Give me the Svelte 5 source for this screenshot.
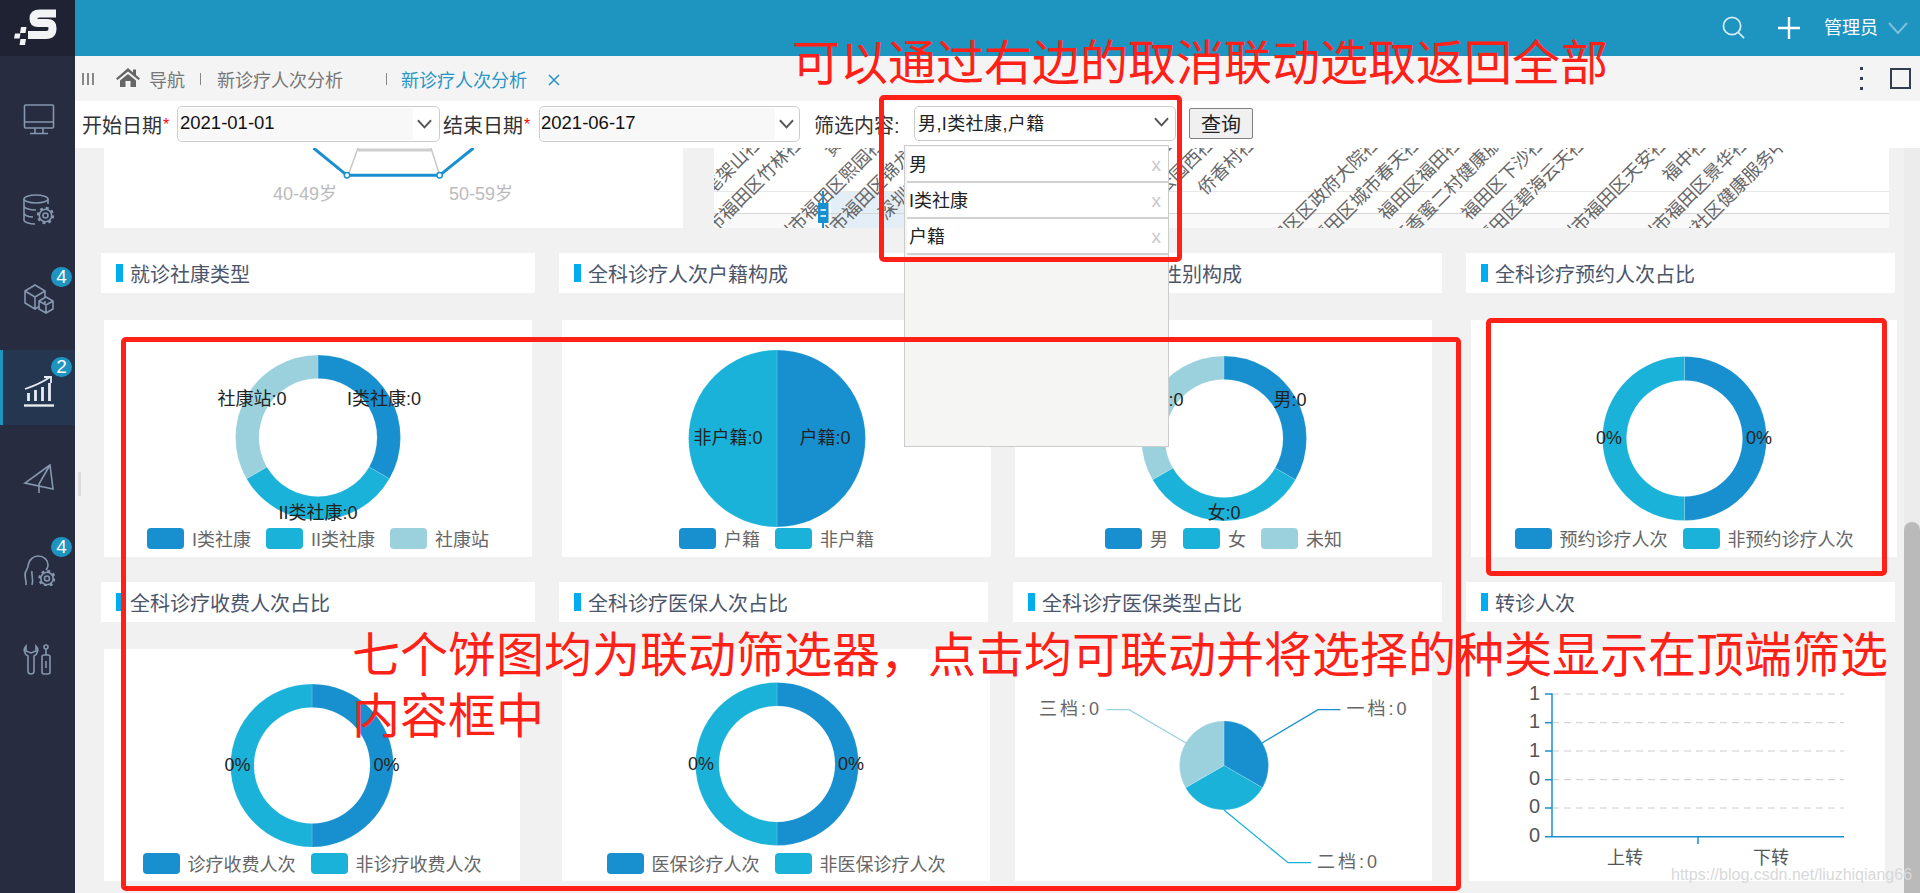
<script>
  const c1 = '#1890cf', c2 = '#1ab2d8', c3 = '#9ad1dd';

  function pt(cx, cy, r, a) {
    const t = (a - 90) * Math.PI / 180;
    return (cx + r * Math.cos(t)).toFixed(2) + ' ' + (cy + r * Math.sin(t)).toFixed(2);
  }
  function arc(cx, cy, R, r, a0, a1) {
    const outer = `M${pt(cx, cy, R, a0)} A${R} ${R} 0 0 1 ${pt(cx, cy, R, a1)}`;
    if (!r) return `${outer} L${cx} ${cy} Z`;
    return `${outer} L${pt(cx, cy, r, a1)} A${r} ${r} 0 0 0 ${pt(cx, cy, r, a0)} Z`;
  }
  function slices(n) {
    const colors = [c1, c2, c3];
    return Array.from({ length: n }, (_, i) => ({ color: colors[i], a0: (360 / n) * i, a1: (360 / n) * (i + 1) }));
  }

  const row1 = [
    { x: 104, w: 428, cx: 318, cy: 437.5, R: 82.5, r: 59, n: 3,
      labels: [['I类社康:0', 384, 398], ['II类社康:0', 318, 512], ['社康站:0', 252, 398]],
      legend: ['I类社康', 'II类社康', '社康站'] },
    { x: 562, w: 429, cx: 777, cy: 438.5, R: 88.5, r: 0, n: 2,
      labels: [['户籍:0', 825, 437], ['非户籍:0', 728, 437]],
      legend: ['户籍', '非户籍'] },
    { x: 1015, w: 417, cx: 1224, cy: 438.5, R: 82.5, r: 59, n: 3,
      labels: [['男:0', 1290, 399], ['女:0', 1224, 512], ['未知:0', 1158, 399]],
      legend: ['男', '女', '未知'] },
    { x: 1471, w: 426, cx: 1684.5, cy: 438.5, R: 82, r: 58, n: 2,
      labels: [['0%', 1759, 437], ['0%', 1609, 437]],
      legend: ['预约诊疗人次', '非预约诊疗人次'] }
  ];
  const row2a = { x: 104, w: 416, cx: 312, cy: 767.5, R: 81.5, r: 58, n: 2,
    labels: [['0%', 386.5, 766], ['0%', 237.5, 766]], legend: ['诊疗收费人次', '非诊疗收费人次'] };
  const row2b = { x: 562, w: 428, cx: 777, cy: 766, R: 81.5, r: 58, n: 2,
    labels: [['0%', 851, 765], ['0%', 701, 765]], legend: ['医保诊疗人次', '非医保诊疗人次'] };

  const titles1 = ['就诊社康类型', '全科诊疗人次户籍构成', '全科诊疗人次性别构成', '全科诊疗预约人次占比'];
  const titles2 = ['全科诊疗收费人次占比', '全科诊疗医保人次占比', '全科诊疗医保类型占比', '转诊人次'];

  const axisLabels = [
    [764, '深圳市福田区笔架山社区'], [805, '深圳市福田区竹林社区'], [846, '黄木'],
    [887, '深圳市福田区熙园社区'], [928, '深圳市福田区锦龙社区'], [964, '深圳市福田社区'],
    [1176, '福田区政府社区'], [1217, '深圳市福田区公园西社区'], [1258, '侨香村社区'],
    [1382, '深圳市福田区区政府大院社区'], [1423, '深圳市福田区城市春天社区'], [1464, '福田区福田社区'],
    [1504, '深圳市福田区香蜜二村健康服务'], [1547, '福田区下沙社区'], [1588, '深圳市福田区碧海云天社区'],
    [1670, '深圳市福田区天安社区'], [1710, '福中社区'], [1751, '深圳市福田区景华社区'],
    [1790, '福田区华强北社区健康服务中心']
  ];

  const gridY = [696, 724.7, 753, 781.7, 810];
  const tickLabels = [['1', 694], ['1', 722], ['1', 751], ['0', 779], ['0', 807], ['0', 836]];

  const navItems = [
    { key: 'monitor' }, { key: 'db' }, { key: 'cubes', badge: 4 }, { key: 'chart', badge: 2, active: true },
    { key: 'plane' }, { key: 'head', badge: 4 }, { key: 'tools' }
  ];
  const dropItems = ['男', 'I类社康', '户籍'];
</script>

{#snippet chevron()}
  <svg class="chev" viewBox="0 0 16 10"><polyline points="1,1 8,8.5 15,1" /></svg>
{/snippet}

{#snippet gear(x, y)}
  <circle class="fillbg" cx={x} cy={y} r="6.200" />
  <circle cx={x} cy={y} r="2.500" />
  <circle cx={x} cy={y} r="7.400" stroke-width="2.600" stroke-dasharray="2.900 2.910" />
{/snippet}

{#snippet navIcon(key)}
  <svg class="nav-icon" class:on={key === 'chart'} viewBox="0 0 32 32">
    {#if key === 'monitor'}
      <rect x="1.500" y="1" width="29" height="23" rx="1" />
      <path d="M1.500 18H30.500M12 24V29M20 24V29M7 29.500H25" />
    {:else if key === 'db'}
      <ellipse cx="13" cy="5" rx="12" ry="4" />
      <path d="M1 5V26C1 28 6 30 12 30M25 5V10M1 12C1 14 6 16 13 16M1 19C1 21 5 23 10 23" />
      {@render gear(22.500, 21.500)}
    {:else if key === 'cubes'}
      <path d="M12 1L22 7V19L12 25L2 19V7ZM2 7L12 13L22 7M12 13V25" />
      <path class="fillbg" d="M23 13L30 17V25L23 29L16 25V17ZM16 17L23 21L30 17M23 21V29" />
    {:else if key === 'chart'}
      <path d="M1 30.500H31" stroke-width="2.400" />
      <path d="M5.500 26V18M12.500 26V15M19.500 26V12M26.500 26V8" stroke-width="2.800" />
      <path d="M2 14C11 11 20 7 27 2M21 2H28V8" stroke-width="1.800" />
    {:else if key === 'plane'}
      <path d="M27 1L2 19L30 25ZM27 1L16 20V29" />
    {:else if key === 'head'}
      <path d="M3 31C4 25 0 22 3 17C4 15 5 14 5 12C6 5 11 2 15 2C21 2 25 6 25 11C25 13 24 15 23 16M9 31C11 25 8 21 9 17" />
      {@render gear(24, 24.500)}
    {:else}
      <path d="M3 2C0 5 1 10 5 12V27A3 3 0 0 0 11 27V12C15 10 16 5 13 2V7L8 9L3 7Z" />
      <circle cx="23" cy="3" r="2" />
      <path d="M23 5V11M23 17V24" />
      <rect x="19" y="11" width="8" height="19" rx="2" />
    {/if}
  </svg>
{/snippet}

{#snippet legend(items)}
  <div class="legend">
    {#each items as t, i}
      <span class="leg"><i class="sw" class:s1={i === 0} class:s2={i === 1} class:s3={i === 2}></i>{t}</span>
    {/each}
  </div>
{/snippet}

{#snippet pie(d, y0, h)}
  <svg class="plot" width={d.w} height={h} viewBox="{d.x} {y0} {d.w} {h}">
    {#each slices(d.n) as s}
      <path d={arc(d.cx, d.cy, d.R, d.r, s.a0, s.a1)} fill={s.color} stroke="#fff" stroke-opacity=".25" stroke-width=".6" />
    {/each}
    {#each d.labels as l}
      <text class="plab" x={l[1]} y={l[2] + 6.5} text-anchor="middle">{l[0]}</text>
    {/each}
  </svg>
{/snippet}

<div class="app">
  <aside class="side">
    <div class="logo">
      <svg viewBox="0 0 75 56" width="75" height="56">
        <path d="M56 13.500H40Q33.500 13.500 33.500 18.500Q33.500 23 38 23H47Q52.500 23 52.500 28Q52.500 35 46 35H28" fill="none" stroke="#f2f3f5" stroke-width="8" />
        <path d="M21 27h5.500l-1 6h-5.500zM15 33.500h5.500l-1 5h-5.500zM20.500 39h5.500l-1 6h-5.500z" fill="#f2f3f5" />
      </svg>
    </div>
    <nav class="nav">
      {#each navItems as it}
        <div class="nav-item" class:active={it.active}>
          {@render navIcon(it.key)}
          {#if it.badge}<span class="badge">{it.badge}</span>{/if}
        </div>
      {/each}
    </nav>
    <span class="handle"></span>
  </aside>

  <main class="main">
    <header class="top">
      <svg class="ic-search" viewBox="0 0 24 24"><circle cx="10.500" cy="10.500" r="9" /><path d="M17 17L23 23" /></svg>
      <svg class="ic-plus" viewBox="0 0 22 22"><path d="M11 0V22M0 11H22" /></svg>
      <span class="user">管理员</span>
      <svg class="ic-down" viewBox="0 0 20 12"><polyline points="1,1 10,11 19,1" /></svg>
    </header>

    <div class="tabs">
      <span class="bars"><i></i><i></i><i></i></span>
      <svg class="home" viewBox="0 0 24 19"><path d="M12 0L0 10.500L1.500 12L12 3.500L22.500 12L24 10.500L20 7V1.500H17V4.500Z M4 12.500L12 6L20 12.500V19H14.500V13H9.500V19H4Z" /></svg>
      <span class="crumb nav-t">导航</span>
      <i class="sep s-a"></i>
      <span class="crumb c-a">新诊疗人次分析</span>
      <i class="sep s-b"></i>
      <span class="crumb cur">新诊疗人次分析</span>
      <svg class="close" viewBox="0 0 12 12"><path d="M1 1L11 11M11 1L1 11" /></svg>
      <span class="tabs-right">
        <span class="dots"><i></i><i></i><i></i></span>
        <i class="maxi"></i>
      </span>
    </div>

    <div class="filter">
      <span class="lab l1">开始日期<em>*</em></span>
      <div class="date d1"><span class="val">2021-01-01</span>{@render chevron()}</div>
      <span class="lab l2">结束日期<em>*</em></span>
      <div class="date d2"><span class="val">2021-06-17</span>{@render chevron()}</div>
      <span class="lab l3">筛选内容:</span>
      <div class="sel"><span>男,I类社康,户籍</span>{@render chevron()}</div>
      <button class="query">查询</button>
      <div class="drop">
        {#each dropItems as d}
          <div class="drop-item"><span>{d}</span><span class="x">x</span></div>
        {/each}
      </div>
    </div>

    <div class="body">
      <div class="scroll-area">
        <div class="toprow">
          <div class="card top-a">
            <svg width="579" height="80" viewBox="104 148 579 80">
              <polyline points="358,148 349,173" fill="none" stroke="#c8c8c8" stroke-width="1.500" />
              <polyline points="431,148 439,173" fill="none" stroke="#c8c8c8" stroke-width="1.500" />
              <line x1="358" y1="150" x2="431" y2="150" stroke="#cfcfcf" stroke-width="3" />
              <polyline points="313.500,148 347,175.300 439.600,175.300 473.500,148" fill="none" stroke={c1} stroke-width="3" />
              <circle cx="347" cy="175.300" r="2.700" fill="#fff" stroke={c1} stroke-width="1.500" />
              <circle cx="439.600" cy="175.300" r="2.700" fill="#fff" stroke={c1} stroke-width="1.500" />
              <text class="age" x="305" y="200" text-anchor="middle">40-49岁</text>
              <text class="age" x="481" y="200" text-anchor="middle">50-59岁</text>
            </svg>
          </div>
          <div class="card top-b">
            <svg width="1175" height="80" viewBox="714 148 1175 80">
              <rect x="714" y="213" width="1175" height="15" fill="#f9f9f9" />
              <rect x="831" y="191" width="180" height="37" fill="#e4eef7" />
              <line x1="714" y1="191.500" x2="1889" y2="191.500" stroke="#e8e8e8" />
              <line x1="714" y1="213.500" x2="1889" y2="213.500" stroke="#d6d6d6" />
              {#each axisLabels as a}
                <text class="rot" text-anchor="end" transform="translate({a[0] + 11} 132) rotate(-45)">{a[1]}</text>
              {/each}
              <line x1="823" y1="191" x2="823" y2="228" stroke={c1} stroke-width="2" />
              <rect x="818" y="203" width="10.500" height="20" fill={c1} />
              <path d="M820.500 210H826M820.500 216H826" stroke="#fff" stroke-width="1.500" />
            </svg>
          </div>
        </div>

        <div class="row titles">
          {#each titles1 as t}<div class="title"><i></i>{t}</div>{/each}
        </div>

        <div class="row charts r1">
          {#each row1 as d}
            <div class="card chart">
              {@render pie(d, 320, 208)}
              {@render legend(d.legend)}
            </div>
          {/each}
        </div>

        <div class="row titles">
          {#each titles2 as t}<div class="title"><i></i>{t}</div>{/each}
        </div>

        <div class="row charts r2">
          <div class="card chart">
            {@render pie(row2a, 651, 204)}
            {@render legend(row2a.legend)}
          </div>
          <div class="card chart">
            {@render pie(row2b, 651, 204)}
            {@render legend(row2b.legend)}
          </div>
          <div class="card chart">
            <svg width="417" height="232" viewBox="1015 651 417 232">
              {#each slices(3) as s}
                <path d={arc(1224, 767.500, 44.500, 0, s.a0, s.a1)} fill={s.color} stroke="#fff" stroke-opacity=".3" stroke-width=".6" />
              {/each}
              <polyline points="1106.500,711.700 1129,711.700 1186,745" fill="none" stroke={c3} stroke-width="1.300" />
              <polyline points="1262,745 1318,711.700 1340.400,711.700" fill="none" stroke={c1} stroke-width="1.300" />
              <polyline points="1224,812 1288,864.700 1311,864.700" fill="none" stroke={c2} stroke-width="1.300" />
              <text class="callout" x="1039" y="717">三档:0</text>
              <text class="callout" x="1346.500" y="717">一档:0</text>
              <text class="callout" x="1317" y="870">二档:0</text>
            </svg>
          </div>
          <div class="card chart">
            <svg width="416" height="232" viewBox="1469 651 416 232">
              {#each gridY as y}
                <line x1="1552" y1={y} x2="1844" y2={y} stroke="#ccc" stroke-dasharray="7 5" />
                <line x1="1545" y1={y} x2="1552" y2={y} stroke={c1} stroke-width="1.500" />
              {/each}
              <line x1="1552" y1="695.300" x2="1552" y2="839" stroke={c1} stroke-width="1.500" />
              <line x1="1545" y1="838.700" x2="1844" y2="838.700" stroke={c1} stroke-width="1.500" />
              <line x1="1698" y1="838.700" x2="1698" y2="846" stroke={c1} stroke-width="1.500" />
              {#each tickLabels as t}
                <text class="tick" x="1540" y={t[1] + 7.500} text-anchor="end">{t[0]}</text>
              {/each}
              <text class="xl" x="1625" y="865.500" text-anchor="middle">上转</text>
              <text class="xl" x="1771" y="865.500" text-anchor="middle">下转</text>
            </svg>
          </div>
        </div>
      </div>
      <div class="scrollbar"><div class="thumb"></div></div>
    </div>
  </main>

  <div class="note n1">可以通过右边的取消联动选取返回全部</div>
  <div class="note n2">七个饼图均为联动筛选器，点击均可联动并将选择的种类显示在顶端筛选内容框中</div>
  <div class="redbox b1"></div>
  <div class="redbox b2"></div>
  <div class="redbox b3"></div>
  <div class="mark">https://blog.csdn.net/liuzhiqiang66</div>
</div>

<style>
  :global(body) { margin: 0; overflow: hidden; background: #f1f1f1; }
  .app {
    position: relative; display: flex; width: 1920px; height: 893px; overflow: hidden;
    font-family: "Liberation Sans", "Noto Sans CJK SC", sans-serif; color: #333;
  }
  i { font-style: normal; }

  .side { position: relative; width: 75px; flex: none; background: #272c40; }
  .logo { height: 56px; background: #1f2233; }
  .logo svg { display: block; }
  .nav { display: flex; flex-direction: column; gap: 15px; padding-top: 24px; }
  .nav-item { position: relative; height: 75px; display: flex; justify-content: center; padding-top: 24px; box-sizing: border-box; }
  .nav-item.active { background: #253650; box-shadow: inset 3px 0 0 #1e94c0; padding-top: 25px; }
  .nav-icon { width: 32px; height: 32px; margin-left: 2px; fill: none; stroke: #8597ae; stroke-width: 1.6; }
  .nav-icon.on { stroke: #e8edf2; }
  .fillbg { fill: #272c40; }
  .badge {
    position: absolute; left: 51px; top: 7px; width: 21px; height: 20px; border-radius: 10px;
    background: #1e94c0; color: #fff; font-size: 19px; line-height: 20px; text-align: center;
  }
  .handle { position: absolute; left: 78px; top: 472px; width: 3px; height: 24px; background: #dcdcdc; }

  .main { flex: 1; min-width: 0; display: flex; flex-direction: column; }
  .top {
    height: 56px; flex: none; background: #1e94c0; display: flex; align-items: center;
    justify-content: flex-end; padding-right: 12px; box-sizing: border-box;
  }
  .ic-search { width: 23px; height: 23px; margin: -2px 33px 0 0; fill: none; stroke: #d6ecf5; stroke-width: 1.8; }
  .ic-plus { width: 22px; height: 22px; margin-right: 24px; fill: none; stroke: #fff; stroke-width: 2.4; }
  .user { color: #fff; font-size: 18px; margin: -4px 10px 0 0; }
  .ic-down { width: 20px; height: 12px; fill: none; stroke: #7dc0db; stroke-width: 2; }

  .tabs {
    height: 45px; flex: none; background: #f4f4f4; display: flex; align-items: center;
    padding: 0 9px 0 7px; box-sizing: border-box; font-size: 18px; color: #777;
  }
  .bars { display: flex; gap: 3px; width: 12px; }
  .bars i { width: 2px; height: 12px; background: #888; }
  .home { width: 24px; height: 19px; margin-left: 22px; fill: #666; margin-top: -2px; }
  .nav-t { margin-left: 9px; }
  .sep { width: 1px; height: 12px; background: #888; }
  .s-a { margin-left: 15px; }
  .c-a { margin-left: 16px; }
  .s-b { margin-left: 43px; }
  .cur { margin-left: 14px; color: #2a96c4; }
  .close { width: 12px; height: 12px; margin: 3px 0 0 21px; fill: none; stroke: #2a96c4; stroke-width: 1.6; }
  .tabs-right { margin-left: auto; display: flex; align-items: center; gap: 27px; }
  .dots { display: flex; flex-direction: column; gap: 7px; }
  .dots i { width: 3px; height: 3px; background: #333e50; }
  .maxi { width: 17px; height: 17px; border: 2px solid #333e50; }

  .filter {
    position: relative; z-index: 5; height: 47px; flex: none; background: #fff; display: flex;
    align-items: center; padding-left: 7px; box-sizing: border-box;
  }
  .lab { font-size: 20px; color: #333; white-space: nowrap; }
  .lab em { color: #f00; font-style: normal; font-size: 16px; margin-left: 1px; vertical-align: 3px; }
  .l1 { width: 95px; }
  .l2 { width: 96px; margin-left: 3px; }
  .l3 { width: 100px; margin-left: 14px; }
  .date {
    height: 36px; box-sizing: border-box; border: 1px solid #ccc; border-radius: 5px; background: #fff;
    display: flex; align-items: center; position: relative; margin-top: -1px;
  }
  .d1 { width: 263px; }
  .d2 { width: 261px; }
  .val {
    width: 234px; height: 32px; margin-left: 1px; background: #f8f8f8; border-radius: 3px;
    font-size: 18.500px; line-height: 30px; padding-left: 1px; color: #111; box-sizing: border-box;
  }
  .d2 .val { padding-left: 0; }
  .chev { width: 15px; height: 10px; margin-left: 4px; fill: none; stroke: #555; stroke-width: 2; }
  .sel {
    width: 262px; height: 35px; box-sizing: border-box; border: 1px solid #ccc; border-radius: 5px;
    display: flex; align-items: center; justify-content: space-between; padding: 0 6px 3px 3px;
    font-size: 18px; letter-spacing: .4px; color: #222; margin-top: -3px;
  }
  .query {
    width: 64px; height: 31px; margin: -2px 0 0 13px; padding: 0; box-sizing: border-box; background: #f0f0f0;
    border: 1px solid #808080; border-radius: 2px; font: inherit; font-size: 20px; color: #222;
  }
  .drop {
    position: absolute; left: 829px; top: 44px; width: 265px; height: 302px; box-sizing: border-box;
    background: #f5f5f3; border: 1px solid #ccc; padding: 1px 0 0 2px;
  }
  .drop-item {
    height: 36px; box-sizing: border-box; background: #fff; border-bottom: 2px solid #d2d2d2;
    display: flex; align-items: center; justify-content: space-between; padding: 0 7px 2px 2px;
    font-size: 18px; color: #222;
  }
  .x { color: #c8c8c8; font-size: 19px; margin-top: 4px; }

  .body { flex: 1; min-height: 0; display: flex; }
  .scroll-area { flex: 1; min-width: 0; overflow: hidden; background: #f1f1f1; }
  .scrollbar { width: 16px; flex: none; background: #ececec; }
  .thumb { margin-top: 374px; height: 371px; background: #bababa; border-radius: 8px 8px 0 0; }

  .card { background: #fff; overflow: hidden; }
  .card svg { display: block; }
  .toprow { display: flex; height: 80px; margin-bottom: 25px; padding-left: 29px; }
  .top-a { width: 579px; }
  .top-b { width: 1175px; margin-left: 31px; }
  .age { font-size: 18px; fill: #bbb; }
  .rot { font-size: 18px; fill: #666; }

  .row { display: flex; }
  .titles { height: 40px; margin-bottom: 27px; padding-left: 26px; }
  .titles + .r2 { margin-top: 2px; }
  .title {
    width: 429px; background: #fff; display: flex; align-items: center; box-sizing: border-box;
    padding-left: 15px; font-size: 20px; color: #4b566b; white-space: nowrap;
  }
  .title i { width: 7px; height: 18px; background: #00aeef; margin-right: 7px; }
  .title:nth-child(1) { width: 434px; }
  .title:nth-child(2) { margin-left: 24px; }
  .title:nth-child(3) { margin-left: 25px; }
  .title:nth-child(4) { margin-left: 24px; }

  .charts { padding-left: 29px; }
  .chart { flex: none; display: flex; flex-direction: column; }
  .r1 { height: 237px; margin-bottom: 25px; }
  .r2 { height: 232px; }
  .r1 .chart:nth-child(1) { width: 428px; }
  .r1 .chart:nth-child(2) { width: 429px; margin-left: 30px; }
  .r1 .chart:nth-child(3) { width: 417px; margin-left: 24px; }
  .r1 .chart:nth-child(4) { width: 426px; margin-left: 39px; }
  .r2 .chart:nth-child(1) { width: 416px; }
  .r2 .chart:nth-child(2) { width: 428px; margin-left: 42px; }
  .r2 .chart:nth-child(3) { width: 417px; margin-left: 25px; }
  .r2 .chart:nth-child(4) { width: 416px; margin-left: 37px; }

  .plot { flex: none; overflow: visible; }
  .plab { font-size: 18px; fill: #222; }
  .callout { font-size: 18px; fill: #666; letter-spacing: 3px; }
  .tick { font-size: 20px; fill: #555; }
  .xl { font-size: 18px; fill: #555; }

  .legend { display: flex; justify-content: center; gap: 15px; height: 21px; margin-top: -1px; align-items: center; font-size: 18px; color: #666; white-space: nowrap; }
  .leg { display: flex; align-items: center; gap: 8px; }
  .sw { width: 37px; height: 21px; border-radius: 4px; transform: translateY(1px); }
  .s1 { background: #1890cf; }
  .s2 { background: #1ab2d8; }
  .s3 { background: #9ad1dd; }

  .note {
    position: absolute; z-index: 12; color: #ff2017; font-size: 48px; line-height: 61px;
    font-family: "Noto Sans CJK SC", sans-serif; pointer-events: none;
  }
  .n1 { left: 792px; top: 29px; white-space: nowrap; }
  .n2 { left: 352px; top: 621px; width: 1540px; }
  .redbox { position: absolute; z-index: 11; box-sizing: border-box; border: 5px solid #ff2017; border-radius: 5px; pointer-events: none; }
  .b1 { left: 879px; top: 95px; width: 303px; height: 167px; }
  .b2 { left: 121px; top: 337px; width: 1340px; height: 554px; }
  .b3 { left: 1486px; top: 318px; width: 401px; height: 258px; }
  .mark { position: absolute; z-index: 13; left: 1671px; top: 864px; font-size: 16px; line-height: 22px; color: #d8d8d8; white-space: nowrap; }
</style>
